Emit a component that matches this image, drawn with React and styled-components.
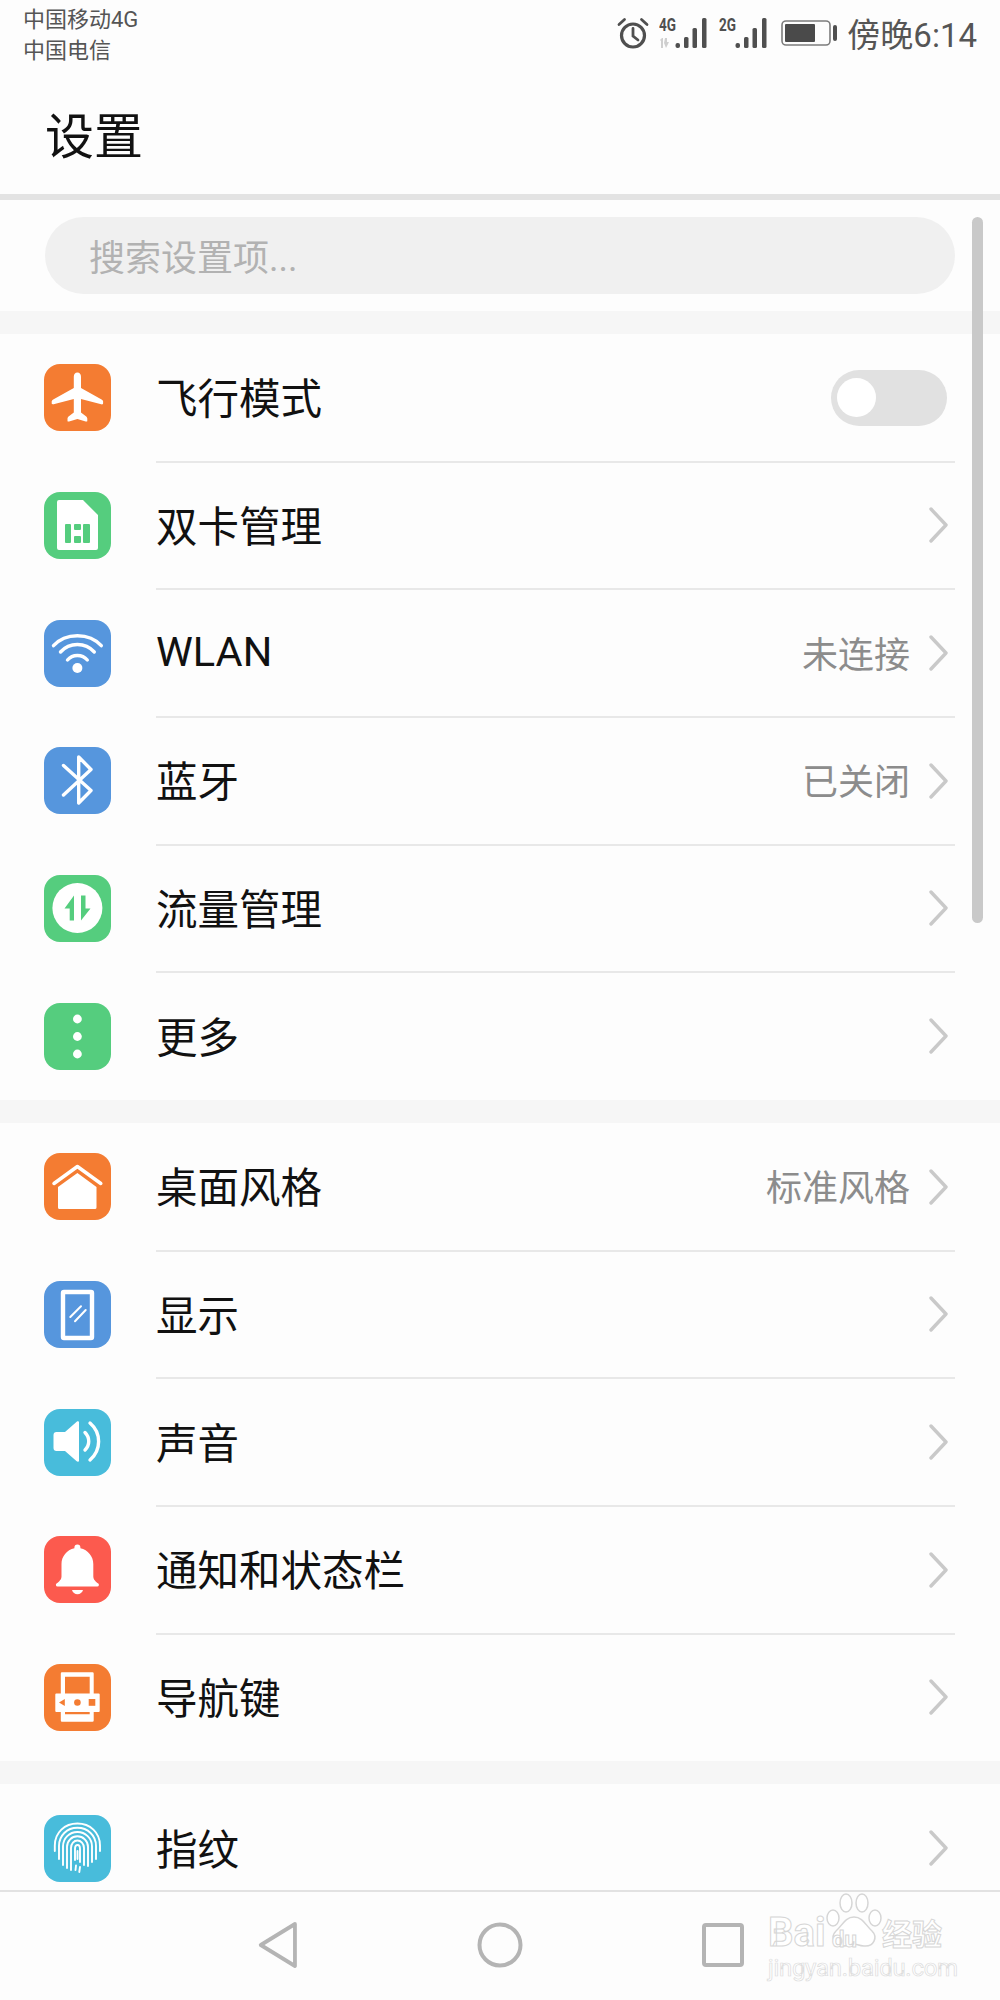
import React from "react";
import styled, { createGlobalStyle } from "styled-components";

const GlobalStyle = createGlobalStyle`
  html, body {
    margin: 0;
    padding: 0;
    background: #fdfdfd;
    font-family: Roboto, "Noto Sans CJK SC", sans-serif;
  }
`;

const Phone = styled.div`
  display: flex;
  flex-direction: column;
  width: 1000px;
  height: 2000px;
  overflow: hidden;
  position: relative;
  background: #fdfdfd;
`;

const StatusBar = styled.div`
  display: flex;
  justify-content: space-between;
  height: 66px;
  padding: 4px 23px 0;
  box-sizing: border-box;
  flex-shrink: 0;
`;

const Carriers = styled.div`
  font-size: 22px;
  line-height: 31px;
  color: #555;
  height: 62px;
`;

const StatusRight = styled.div`
  display: flex;
  align-items: center;
  height: 62px;
  margin-top: -2px;
`;

const Time = styled.span`
  font-size: 33px;
  color: #555;
  margin-left: 10px;
  white-space: nowrap;
`;

const Header = styled.div`
  display: flex;
  align-items: center;
  padding: 5px 45px 0;
  box-sizing: border-box;
  border-bottom: 6px solid #e3e3e3;
  height: 134px;
  flex-shrink: 0;
  font-size: 49px;
  color: #111;
`;

const Content = styled.div`
  flex: 1;
  position: relative;
  overflow: hidden;
`;

const SearchWrap = styled.div`
  padding: 17px 45px;
`;

const SearchBox = styled.div`
  display: flex;
  align-items: center;
  height: 77px;
  padding: 0 0 2px 44px;
  box-sizing: border-box;
  border-radius: 39px;
  background: #f0f0f0;
  color: #b2b2b2;
  font-size: 36px;
`;

const Gap = styled.div`
  height: 23px;
  background: #f6f6f6;
`;

const Row = styled.div`
  display: flex;
  align-items: center;
  height: 127.67px;
  padding-left: 44px;
`;

const IconBox = styled.div`
  width: 67px;
  height: 67px;
  border-radius: 16px;
  background: ${({ $bg }) => $bg};
  flex-shrink: 0;
  svg {
    display: block;
  }
`;

const RowBody = styled.div`
  display: flex;
  align-items: center;
  flex: 1;
  height: 100%;
  margin: 0 45px;
  padding-right: 7px;
  box-sizing: border-box;
  position: relative;
  &::after {
    content: "";
    display: ${({ $last }) => ($last ? "none" : "block")};
    position: absolute;
    left: 0;
    right: 0;
    bottom: -1px;
    height: 2px;
    background: #e8e8e8;
  }
`;

const Label = styled.span`
  flex: 1;
  margin-bottom: 3px;
  font-size: 41.5px;
  color: #111;
`;

const Value = styled.span`
  margin: 0 18px 3px 0;
  font-size: 36px;
  color: #8c8c8c;
`;

const Toggle = styled.div`
  display: flex;
  align-items: center;
  width: 116px;
  height: 56px;
  margin-right: 1px;
  padding-left: 6px;
  box-sizing: border-box;
  border-radius: 28px;
  background: #e1e1e1;
`;

const Knob = styled.div`
  width: 39px;
  height: 39px;
  border-radius: 50%;
  background: #fff;
`;

const ScrollThumb = styled.div`
  position: absolute;
  top: 17px;
  right: 17px;
  width: 11px;
  height: 706px;
  border-radius: 6px;
  background: #c9c9c9;
`;

const NavBar = styled.div`
  display: flex;
  justify-content: center;
  align-items: center;
  gap: 177px;
  height: 110px;
  flex-shrink: 0;
  border-top: 2px solid #e2e2e2;
  box-sizing: border-box;
  padding-bottom: 2px;
  background: #fdfdfd;
`;

const Watermark = styled.div`
  position: absolute;
  left: 766px;
  top: 1893px;
  width: 182px;
  height: 90px;
  color: #fff;
  -webkit-text-stroke: 1px #d6d6d6;
`;

const Paw = styled.svg`
  position: absolute;
  left: 60px;
  top: 0;
`;

const MarkText = styled.span`
  position: absolute;
  left: ${({ $left }) => $left}px;
  top: ${({ $top }) => $top}px;
  font-size: ${({ $size }) => $size}px;
  font-weight: 700;
  line-height: 1;
  white-space: nowrap;
`;

const MarkUrl = styled.span`
  position: absolute;
  left: 2px;
  top: 63px;
  font-size: 24px;
  line-height: 1;
  color: #fff;
  -webkit-text-stroke: 0.7px #dcdcdc;
  white-space: nowrap;
  letter-spacing: -0.3px;
`;

const Svg = ({ children }) => (
  <svg width="67" height="67" viewBox="0 0 67 67" fill="none">
    {children}
  </svg>
);

const Plane = () => (
  <Svg>
    <path
      fill="#fff"
      d="M33.4 8.5c-2.3 0-3.6 2-3.6 4.2V24L9.2 35.4c-1 .6-1.5 1.2-1.5 2.2v1.6c0 1 .9 1.4 1.9 1.1L29.8 35v13.4l-4.9 3.9c-1 .8-1.4 1.4-1.4 2.4v2c0 .9.8 1 1.6.8l8.3-2.6 8.3 2.6c.8.2 1.6.1 1.6-.8v-2c0-1-.4-1.6-1.4-2.4l-4.9-3.9V35l20.2 5.3c1 .3 1.9-.1 1.9-1.1v-1.6c0-1-.5-1.6-1.5-2.2L37 24V12.7c0-2.2-1.3-4.2-3.6-4.2z"
    />
  </Svg>
);

const Sim = () => (
  <Svg>
    <path
      fill="#fff"
      fillRule="evenodd"
      d="M15 8h24l15 15v33a2 2 0 0 1-2 2H15a2 2 0 0 1-2-2V10a2 2 0 0 1 2-2zM22 32a1 1 0 0 0-1 1v17a1 1 0 0 0 1 1h4a1 1 0 0 0 1-1V33a1 1 0 0 0-1-1zM31 32a1 1 0 0 0-1 1v4a1 1 0 0 0 1 1h5a1 1 0 0 0 1-1v-4a1 1 0 0 0-1-1zM31 44a1 1 0 0 0-1 1v5a1 1 0 0 0 1 1h5a1 1 0 0 0 1-1v-5a1 1 0 0 0-1-1zM40 32a1 1 0 0 0-1 1v17a1 1 0 0 0 1 1h5a1 1 0 0 0 1-1V33a1 1 0 0 0-1-1z"
    />
  </Svg>
);

const Wifi = () => (
  <Svg>
    <g stroke="#fff" strokeWidth="3.4" strokeLinecap="round">
      <path d="M9.5 25.7C15.5 19 24 15.7 33.4 15.7S51.3 19 57.3 25.7" />
      <path d="M16.5 32C21 27 27 24.5 33.4 24.5S45.8 27 50.3 32" />
      <path d="M23.5 40C26 37 29.5 35.5 33.4 35.5S40.8 37 43.3 40" />
    </g>
    <circle cx="33.4" cy="48" r="5" fill="#fff" />
  </Svg>
);

const Bluetooth = () => (
  <Svg>
    <path
      d="M19.5 18.5L47 43.5 34.7 56V10L47 22.5 19.5 48"
      stroke="#fff"
      strokeWidth="3.4"
      strokeLinecap="round"
      strokeLinejoin="round"
    />
  </Svg>
);

const Traffic = () => (
  <Svg>
    <circle cx="33.4" cy="33" r="25" fill="#fff" />
    <path
      fill="#55cd7e"
      d="M30 20.5v25h-4.3V33.5H20.5zM37 20.5v25L46.5 33.5h-5V20.5z"
    />
  </Svg>
);

const Dots = () => (
  <Svg>
    <circle cx="33.4" cy="16" r="4.4" fill="#fff" />
    <circle cx="33.4" cy="33.5" r="4.4" fill="#fff" />
    <circle cx="33.4" cy="51" r="4.4" fill="#fff" />
  </Svg>
);

const Home = () => (
  <Svg>
    <path
      d="M10 30.5L33.4 13.5 56.8 30.5"
      stroke="#fff"
      strokeWidth="3.5"
      strokeLinecap="round"
      strokeLinejoin="round"
    />
    <path
      fill="#fff"
      d="M33.4 20L52.5 34v20.5a1.5 1.5 0 0 1-1.5 1.5H15.5a1.5 1.5 0 0 1-1.5-1.5V34z"
    />
  </Svg>
);

const Display = () => (
  <Svg>
    <rect x="19" y="11" width="29" height="46" rx="1" stroke="#fff" strokeWidth="4.4" />
    <path
      d="M26.3 36L37 25.3M31 40.3L41.7 29"
      stroke="#fff"
      strokeWidth="2"
      strokeLinecap="round"
    />
  </Svg>
);

const Sound = () => (
  <Svg>
    <path
      fill="#fff"
      d="M35 13.5v38c0 1.4-1.4 1.6-2.3.8L21 42H12.5a3 3 0 0 1-3-3V26a3 3 0 0 1 3-3H21l11.7-10.3c.9-.8 2.3-.6 2.3.8z"
    />
    <path
      d="M41 23.5c5 5 5 12.5 0 17.5M46 14c11.5 10 11.5 27 0 37"
      stroke="#fff"
      strokeWidth="3.4"
      strokeLinecap="round"
    />
  </Svg>
);

const Bell = () => (
  <Svg>
    <path
      fill="#fff"
      d="M33.4 8.5a3 3 0 0 1 3 3v.8C44 14 49.3 20.5 49.3 28v12.5c0 3 2.7 5.5 5 7 1 .7.8 3-1 3H13.5c-1.800 0-2-2.300-1-3 2.300-1.500 5-4 5-7V28c0-7.500 5.300-14 12.900-15.700v-.8a3 3 0 0 1 3-3zM28 54h11c-.6 2.600-2.900 4.300-5.500 4.300S28.600 56.600 28 54z"
    />
  </Svg>
);

const NavKey = () => (
  <Svg>
    <path
      fill="#fff"
      fillRule="evenodd"
      d="M18 8.3h30.5a1.2 1.2 0 0 1 1.2 1.2v20h5a1 1 0 0 1 1 1V47a1 1 0 0 1-1 1h-5v8.500a1.200 1.200 0 0 1-1.200 1.200H18a1.200 1.200 0 0 1-1.200-1.200V48h-4.500a1 1 0 0 1-1-1V30.500a1 1 0 0 1 1-1h4.500v-20A1.200 1.200 0 0 1 18 8.300zM21 12.700v16.800h24.700V12.700zM21 48v2.300h24.700V48z"
    />
    <path fill="#f47c32" d="M15 38.5l5.8-3.5v7z" />
    <circle cx="33.4" cy="38.5" r="3.3" fill="#f47c32" />
    <rect x="44.7" y="35" width="6.6" height="6.8" fill="#f47c32" />
  </Svg>
);

const Fingerprint = () => (
  <Svg>
    <g stroke="#fff" strokeWidth="1.9" strokeLinecap="round">
      <path d="M10.8 36V30.5C10.8 17.5 20.8 8.5 33.4 8.5S56 17.5 56 30.5V36" />
      <path d="M15 44V31C15 20.5 23 12.8 33.4 12.8S52 20.5 52 31V44" />
      <path d="M19 50V31.5C19 23 25.5 17 33.4 17S48 23 48 31.5V47" />
      <path d="M23 53V32C23 25.8 27.8 21.3 33.4 21.3S44 25.8 44 32V51" />
      <path d="M27 55V33C27 28.5 30 25.5 33.4 25.5S40 28.5 40 33V50" />
      <path d="M31 45V34C31 31.5 32 30 33.6 30S36 31.5 36 34V47" />
      <path d="M33.5 36V44M32 50.5L31.5 55M36 52L35.3 57" />
    </g>
  </Svg>
);

const Chevron = () => (
  <svg width="20" height="36" viewBox="0 0 20 36" fill="none">
    <path
      d="M3 2L18 18 3 34"
      stroke="#c9c9c9"
      strokeWidth="3.4"
      strokeLinecap="round"
      strokeLinejoin="round"
    />
  </svg>
);

const Alarm = () => (
  <svg width="32" height="32" viewBox="0 0 32 32" fill="none" stroke="#4f4f4f" style={{ marginRight: -2 }}>
    <circle cx="16" cy="18.5" r="11.5" strokeWidth="3.2" />
    <path d="M16 11.5v7.5l5 4" strokeWidth="2.8" strokeLinecap="round" />
    <path d="M2 7.5l5.5-5M30 7.5l-5.500-5" strokeWidth="2.8" strokeLinecap="round" />
  </svg>
);

const Signal = ({ net, roaming }) => (
  <svg width="48" height="38" viewBox="0 -6 48 38" style={{ marginLeft: 12, marginTop: -6 }}>
    <text x="0" y="14" fontSize="18" fontWeight="700" fill="#4f4f4f" fontFamily="Roboto" textLength="17" lengthAdjust="spacingAndGlyphs">
      {net}
    </text>
    {roaming && <path d="M1 23l2-2h1v10H2v-7zM6 21h2v4h2l-3 6-2-5z" fill="#cfcfcf" />}
    <rect x="16.5" y="26" width="4.5" height="5" rx="2" fill="#4f4f4f" />
    <rect x="25" y="20" width="4.5" height="11" rx="1.5" fill="#4f4f4f" />
    <rect x="33.5" y="11" width="4.5" height="20" rx="1.5" fill="#4f4f4f" />
    <rect x="43" y="1" width="4.5" height="30" rx="1.5" fill="#4f4f4f" />
  </svg>
);

const Battery = () => (
  <svg width="56" height="26" viewBox="0 0 56 26" fill="none" style={{ marginLeft: 14 }}>
    <rect x="1" y="1" width="48" height="24" rx="4" stroke="#7c7c7c" strokeWidth="1.6" />
    <rect x="4" y="4" width="30" height="18" rx="1" fill="#4a4a4a" />
    <rect x="52" y="5" width="4" height="16" rx="2" fill="#4f4f4f" />
  </svg>
);

const NavIcon = ({ children }) => (
  <svg width="46" height="48" viewBox="0 0 46 48" fill="none" stroke="#b4b4b4" strokeWidth="4" strokeLinejoin="round">
    {children}
  </svg>
);

const group1 = [
  { bg: "#f47c32", Icon: Plane, label: "飞行模式", toggle: true },
  { bg: "#55cd7e", Icon: Sim, label: "双卡管理" },
  { bg: "#5696dd", Icon: Wifi, label: "WLAN", value: "未连接" },
  { bg: "#5696dd", Icon: Bluetooth, label: "蓝牙", value: "已关闭" },
  { bg: "#55cd7e", Icon: Traffic, label: "流量管理" },
  { bg: "#55cd7e", Icon: Dots, label: "更多" },
];

const group2 = [
  { bg: "#f47c32", Icon: Home, label: "桌面风格", value: "标准风格" },
  { bg: "#5696dd", Icon: Display, label: "显示" },
  { bg: "#48bcdb", Icon: Sound, label: "声音" },
  { bg: "#fc5a4e", Icon: Bell, label: "通知和状态栏" },
  { bg: "#f47c32", Icon: NavKey, label: "导航键" },
];

const group3 = [{ bg: "#48bcdb", Icon: Fingerprint, label: "指纹" }];

const Group = ({ items }) =>
  items.map(({ bg, Icon, label, value, toggle }, i) => (
    <Row key={label}>
      <IconBox $bg={bg}>
        <Icon />
      </IconBox>
      <RowBody $last={i === items.length - 1}>
        <Label>{label}</Label>
        {value && <Value>{value}</Value>}
        {toggle ? (
          <Toggle>
            <Knob />
          </Toggle>
        ) : (
          <Chevron />
        )}
      </RowBody>
    </Row>
  ));

const App = () => {
  return (
    <Phone>
      <GlobalStyle />
      <StatusBar>
        <Carriers>
          中国移动4G
          <br />
          中国电信
        </Carriers>
        <StatusRight>
          <Alarm />
          <Signal net="4G" roaming />
          <Signal net="2G" />
          <Battery />
          <Time>傍晚6:14</Time>
        </StatusRight>
      </StatusBar>
      <Header>设置</Header>
      <Content>
        <SearchWrap>
          <SearchBox>搜索设置项...</SearchBox>
        </SearchWrap>
        <Gap />
        <Group items={group1} />
        <Gap />
        <Group items={group2} />
        <Gap />
        <Group items={group3} />
        <ScrollThumb />
      </Content>
      <NavBar>
        <NavIcon>
          <path d="M41 3L5 24l36 21z" transform="matrix(.95 0 0 1 2 0)" />
        </NavIcon>
        <NavIcon>
          <circle cx="23" cy="24" r="20.5" />
        </NavIcon>
        <NavIcon>
          <rect x="4" y="4" width="38" height="40" rx="2" />
        </NavIcon>
      </NavBar>
      <Watermark>
        <Paw width="56" height="56" viewBox="0 0 56 56" fill="#fff" stroke="#d6d6d6" strokeWidth="1.5">
          <ellipse cx="20" cy="10" rx="6" ry="9" />
          <ellipse cx="36" cy="10" rx="6" ry="9" />
          <ellipse cx="7" cy="25" rx="6" ry="8" />
          <ellipse cx="49" cy="25" rx="6" ry="8" />
          <path d="M28 24c-9 0-12 9-18 14-6 6-2 16 8 15 5 0 7-2 10-2s5 2 10 2c10 1 14-9 8-15-6-5-9-14-18-14z" />
        </Paw>
        <MarkText $left={2} $top={20} $size={40}>Bai</MarkText>
        <MarkText $left={66} $top={36} $size={22}>du</MarkText>
        <MarkText $left={116} $top={27} $size={30}>经验</MarkText>
        <MarkUrl>jingyan.baidu.com</MarkUrl>
      </Watermark>
    </Phone>
  );
};

export default App;
